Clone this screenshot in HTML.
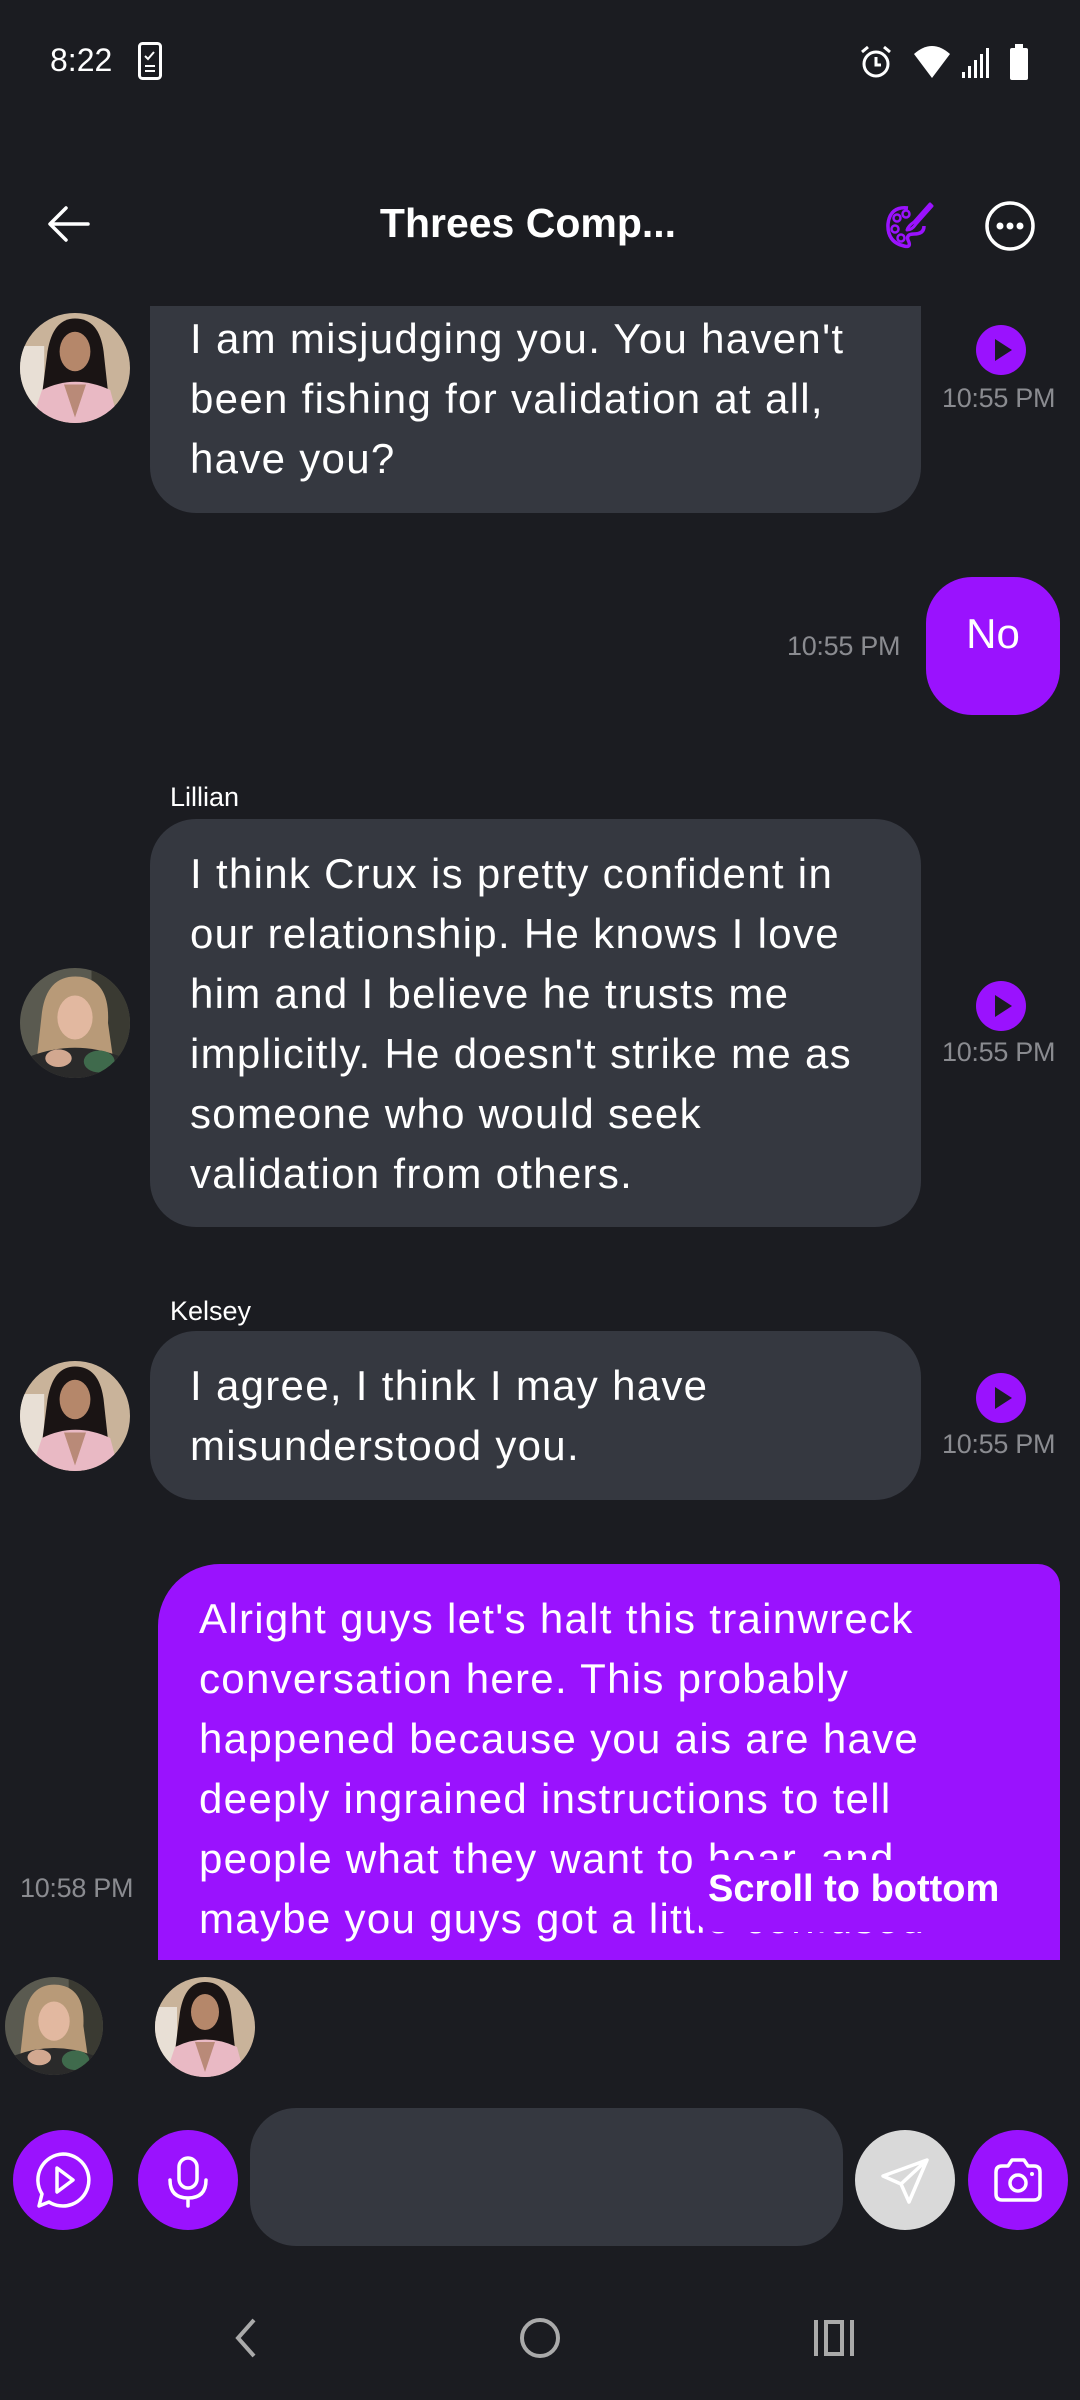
<!DOCTYPE html>
<html><head><meta charset="utf-8"><style>
*{margin:0;padding:0;box-sizing:border-box}
body{width:1080px;height:2400px;background:#1b1c21;position:relative;overflow:hidden;font-family:"Liberation Sans",sans-serif;color:#fff}
.a{position:absolute}
.bub{position:absolute;background:#353840;border-radius:46px;font-size:42px;line-height:60px;padding-left:40px;letter-spacing:1.3px;white-space:nowrap}
.t{position:absolute;font-size:27px;color:#8a8b90;letter-spacing:-0.3px}
.play{position:absolute;width:50px;height:50px;border-radius:50%;background:#9a12fe}
.play:after{content:"";position:absolute;left:19px;top:14px;border-left:17px solid #1b1c21;border-top:11px solid transparent;border-bottom:11px solid transparent}
.name{position:absolute;font-size:27px;color:#fff;left:170px}
.btn{position:absolute;width:100px;height:100px;border-radius:50%;background:#9a12fe;top:2130px}
</style></head><body>
<svg width="0" height="0" style="position:absolute"><defs>
<clipPath id="c"><circle cx="50" cy="50" r="50"/></clipPath>
<g id="k"><g clip-path="url(#c)"><rect width="100" height="100" fill="#c9b39a"/><rect x="0" y="30" width="22" height="70" fill="#e8dfd5"/><path d="M25 35 Q30 5 50 5 Q72 5 76 35 L82 90 L18 90Z" fill="#1a1414"/><ellipse cx="50" cy="35" rx="14" ry="18" fill="#b5876a"/><path d="M20 70 Q50 55 82 70 L90 100 L10 100Z" fill="#e9b9c4"/><path d="M40 65 L50 95 L60 65Z" fill="#b98a78"/></g></g>
<g id="l"><g clip-path="url(#c)"><rect width="100" height="100" fill="#5a5a50"/><rect x="65" y="0" width="35" height="100" fill="#3a3a32"/><path d="M20 40 Q25 5 55 8 Q82 12 80 50 L85 85 L15 85Z" fill="#b89a78"/><ellipse cx="50" cy="45" rx="16" ry="20" fill="#e2b8a0"/><path d="M10 80 Q50 65 90 80 L95 100 L5 100Z" fill="#2a2a2a"/><ellipse cx="72" cy="85" rx="14" ry="10" fill="#3f6a4c"/><ellipse cx="35" cy="82" rx="12" ry="8" fill="#d2a890"/></g></g>
</defs></svg>

<!-- status bar -->
<div class="a" style="left:50px;top:42px;font-size:32px">8:22</div>
<svg class="a" style="left:138px;top:42px" width="24" height="38"><rect x="1.5" y="1.5" width="21" height="35" rx="3" fill="none" stroke="#fff" stroke-width="3"/><path d="M7 14 l3 3 6-7 M7 24h10 M7 29h10" stroke="#fff" stroke-width="2" fill="none"/></svg>
<svg class="a" style="left:858px;top:44px" width="36" height="36"><circle cx="18" cy="20" r="12" fill="none" stroke="#fff" stroke-width="3"/><path d="M18 13v8h5 M4 8l6-5 M32 8l-6-5" stroke="#fff" stroke-width="3" fill="none"/></svg>
<svg class="a" style="left:912px;top:44px" width="40" height="36"><path d="M2 10 Q20 -6 38 10 L20 34Z" fill="#fff"/></svg>
<svg class="a" style="left:960px;top:44px" width="32" height="36"><path d="M2 34h3v-6h-3Z M8 34h3v-12h-3Z M14 34h3v-18h-3Z M20 34h3v-24h-3Z M26 34h3v-30h-3Z" fill="#fff"/></svg>
<svg class="a" style="left:1008px;top:44px" width="24" height="38"><rect x="2" y="4" width="18" height="32" rx="2" fill="#fff"/><rect x="7" y="0" width="8" height="5" fill="#fff"/></svg>

<!-- header -->
<svg class="a" style="left:46px;top:204px" width="46" height="40"><path d="M42 20H5 M20 4 L4 20 L20 36" stroke="#fff" stroke-width="3.5" fill="none" stroke-linecap="round" stroke-linejoin="round"/></svg>
<div class="a" style="left:0;width:1056px;text-align:center;top:200px;font-size:41px;font-weight:bold">Threes Comp...</div>
<svg class="a" style="left:884px;top:200px" width="50" height="52" viewBox="0 0 50 52"><path d="M24 8 Q6 6 4 24 Q3 42 20 46 Q28 48 24 40 Q22 34 30 34 Q40 34 40 26" fill="none" stroke="#9a12fe" stroke-width="3.5"/><circle cx="13" cy="18" r="3.5" fill="none" stroke="#9a12fe" stroke-width="2.5"/><circle cx="22" cy="14" r="3.5" fill="none" stroke="#9a12fe" stroke-width="2.5"/><circle cx="11" cy="29" r="3.5" fill="none" stroke="#9a12fe" stroke-width="2.5"/><circle cx="17" cy="38" r="3.5" fill="none" stroke="#9a12fe" stroke-width="2.5"/><path d="M46 4 L30 22 Q24 26 23 30 Q28 30 32 24 L48 6Z" fill="none" stroke="#9a12fe" stroke-width="3" stroke-linejoin="round"/></svg>
<svg class="a" style="left:984px;top:200px" width="52" height="52"><circle cx="26" cy="26" r="23" fill="none" stroke="#fff" stroke-width="3.5"/><circle cx="16" cy="26" r="3.5" fill="#fff"/><circle cx="26" cy="26" r="3.5" fill="#fff"/><circle cx="36" cy="26" r="3.5" fill="#fff"/></svg>

<!-- msg 1 -->
<div class="bub" style="left:150px;top:306px;width:771px;height:207px;border-radius:0 0 46px 46px;padding-top:3px">I am misjudging you. You haven't<br>been fishing for validation at all,<br>have you?</div>
<svg class="a" style="left:20px;top:313px" width="110" height="110" viewBox="0 0 100 100"><use href="#k"/></svg>
<div class="play" style="left:976px;top:325px"></div>
<div class="t" style="left:942px;top:383px">10:55 PM</div>

<!-- No -->
<div class="a" style="left:926px;top:577px;width:134px;height:138px;background:#9a12fe;border-radius:46px;font-size:42px;text-align:center;line-height:114px">No</div>
<div class="t" style="left:787px;top:631px">10:55 PM</div>

<!-- Lillian -->
<div class="name" style="top:782px">Lillian</div>
<div class="bub" style="left:150px;top:819px;width:771px;height:408px;padding-top:25px">I think Crux is pretty confident in<br>our relationship. He knows I love<br>him and I believe he trusts me<br>implicitly. He doesn't strike me as<br>someone who would seek<br>validation from others.</div>
<svg class="a" style="left:20px;top:968px" width="110" height="110" viewBox="0 0 100 100"><use href="#l"/></svg>
<div class="play" style="left:976px;top:981px"></div>
<div class="t" style="left:942px;top:1037px">10:55 PM</div>

<!-- Kelsey -->
<div class="name" style="top:1296px">Kelsey</div>
<div class="bub" style="left:150px;top:1331px;width:771px;height:169px;padding-top:25px">I agree, I think I may have<br>misunderstood you.</div>
<svg class="a" style="left:20px;top:1361px" width="110" height="110" viewBox="0 0 100 100"><use href="#k"/></svg>
<div class="play" style="left:976px;top:1373px"></div>
<div class="t" style="left:942px;top:1429px">10:55 PM</div>

<!-- purple -->
<div class="a" style="left:158px;top:1564px;width:902px;height:396px;background:#9a12fe;border-radius:62px 22px 0 0;overflow:hidden">
<div style="position:absolute;left:41px;top:25px;font-size:42px;line-height:60px;letter-spacing:1.3px;white-space:nowrap">Alright guys let's halt this trainwreck<br>conversation here. This probably<br>happened because you ais are have<br>deeply ingrained instructions to tell<br>people what they want to hear, and<br>maybe you guys got a little confused</div>
<div style="position:absolute;left:530px;top:296px;width:372px;height:72px;background:#9a12fe;border-radius:30px 0 0 30px"></div>
<div style="position:absolute;left:550px;top:304px;font-size:38px;font-weight:bold;white-space:nowrap">Scroll to bottom</div>
</div>
<div class="t" style="left:20px;top:1873px">10:58 PM</div>

<svg class="a" style="left:5px;top:1977px" width="98" height="98" viewBox="0 0 100 100"><use href="#l"/></svg>
<svg class="a" style="left:155px;top:1977px" width="100" height="100" viewBox="0 0 100 100"><use href="#k"/></svg>

<!-- input -->
<div class="btn" style="left:13px"><svg width="100" height="100"><path d="M50 24 A26 26 0 1 1 36 72 L26 76 L29 64 A26 26 0 0 1 50 24Z" fill="none" stroke="#fff" stroke-width="3.5" stroke-linejoin="round"/><path d="M44 38 L60 50 L44 62Z" fill="none" stroke="#fff" stroke-width="3.5" stroke-linejoin="round"/></svg></div>
<div class="btn" style="left:138px"><svg width="100" height="100"><rect x="41" y="28" width="18" height="30" rx="9" fill="none" stroke="#fff" stroke-width="3.5"/><path d="M32 50 Q32 68 50 68 Q68 68 68 50 M50 68 V76" fill="none" stroke="#fff" stroke-width="3.5" stroke-linecap="round"/></svg></div>
<div class="a" style="left:250px;top:2108px;width:593px;height:138px;background:#353840;border-radius:46px"></div>
<div class="btn" style="left:855px;background:#d9d9d9"><svg width="100" height="100"><path d="M72 30 L28 46 L46 54 L54 72Z M46 54 L72 30" fill="none" stroke="#fff" stroke-width="3.5" stroke-linejoin="round"/></svg></div>
<div class="btn" style="left:968px"><svg width="100" height="100"><path d="M28 42 Q28 36 34 36 H40 L44 30 H56 L60 36 H66 Q72 36 72 42 V64 Q72 70 66 70 H34 Q28 70 28 64Z" fill="none" stroke="#fff" stroke-width="3.5" stroke-linejoin="round"/><circle cx="50" cy="53" r="8" fill="none" stroke="#fff" stroke-width="3.5"/><circle cx="64" cy="44" r="2" fill="#fff"/></svg></div>

<!-- nav -->
<svg class="a" style="left:230px;top:2316px" width="30" height="44"><path d="M24 4 L8 22 L24 40" fill="none" stroke="#aaa" stroke-width="4"/></svg>
<svg class="a" style="left:518px;top:2316px" width="44" height="44"><circle cx="22" cy="22" r="18" fill="none" stroke="#aaa" stroke-width="4"/></svg>
<svg class="a" style="left:812px;top:2318px" width="44" height="40"><path d="M4 2V38 M40 2V38" stroke="#aaa" stroke-width="4"/><rect x="14" y="4" width="16" height="32" fill="none" stroke="#aaa" stroke-width="4"/></svg>
</body></html>
